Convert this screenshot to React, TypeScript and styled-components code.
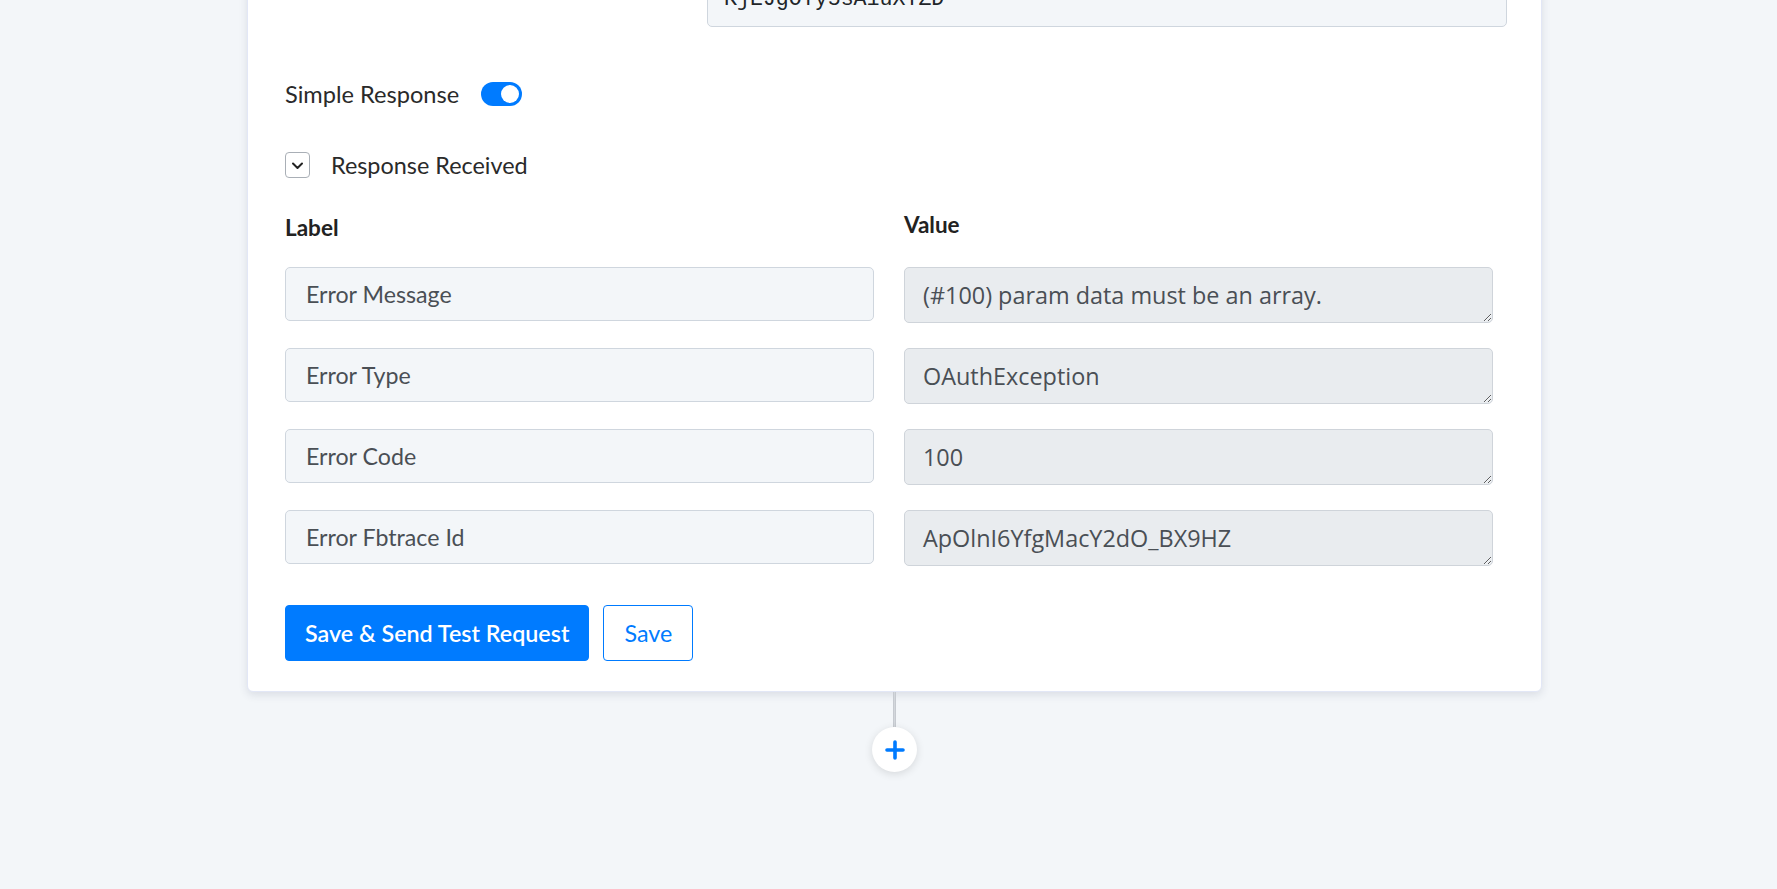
import styled, { createGlobalStyle } from "styled-components";

const GlobalStyle = createGlobalStyle`
  html, body {
    margin: 0;
    padding: 0;
    background: #f3f6f9;
    overflow: hidden;
  }
  body {
    font-family: Lato, "Open Sans", sans-serif;
    color: #212529;
  }
`;

const Page = styled.div`
  display: flex;
  flex-direction: column;
  align-items: center;
  padding-left: 12px;
  height: 889px;
`;

const Card = styled.div`
  width: 1295px;
  box-sizing: border-box;
  margin-top: -80px;
  padding: 50px 36px 30px 37px;
  background: #fff;
  border: 1px solid #e2e7f6;
  border-radius: 6px;
  box-shadow: 0 3px 8px rgba(40, 50, 80, 0.12);
`;

const FieldRow = styled.div`
  display: grid;
  grid-template-columns: 422px 800px;
`;

const TokenInput = styled.input`
  grid-column: 2;
  height: 56px;
  box-sizing: border-box;
  padding: 0 16px;
  background: #f3f6f9;
  border: 1px solid #cfd6de;
  border-radius: 5px;
  font-family: "Liberation Mono", monospace;
  font-size: 21.6px;
  color: #212529;
  outline: none;
`;

const ToggleRow = styled.label`
  display: flex;
  align-items: center;
  gap: 22px;
  height: 28px;
  margin-top: 53px;
  font-size: 23.6px;
  color: #2a2a2a;
`;

const Switch = styled.span<{ $on: boolean }>`
  position: relative;
  width: 41px;
  height: 24px;
  border-radius: 12px;
  background: ${(p) => (p.$on ? "#007bff" : "#ced4da")};
  &::after {
    content: "";
    position: absolute;
    top: 3px;
    left: ${(p) => (p.$on ? "20px" : "3px")};
    width: 18px;
    height: 18px;
    border-radius: 50%;
    background: #fff;
  }
`;

const CollapseRow = styled.div`
  display: flex;
  align-items: center;
  gap: 21px;
  height: 28px;
  margin-top: 43px;
  font-size: 23.4px;
  color: #2a2a2a;
`;

const ChevronBox = styled.button`
  display: flex;
  align-items: center;
  justify-content: center;
  width: 25px;
  height: 26px;
  padding: 0;
  background: #fff;
  border: 1px solid #a9afb6;
  border-radius: 4px;
  color: #222;
`;

const Grid = styled.div`
  display: grid;
  grid-template-columns: 589px 589px;
  column-gap: 30px;
  row-gap: 25px;
  margin-top: 32px;
`;

const HeadCell = styled.div<{ $shift?: number }>`
  height: 28px;
  line-height: 28px;
  margin-top: ${(p) => p.$shift ?? 0}px;
  margin-bottom: ${(p) => 3 - (p.$shift ?? 0)}px;
  font-size: 22.5px;
  font-weight: 700;
  color: #222;
`;

const LabelInput = styled.input`
  height: 54px;
  box-sizing: border-box;
  padding: 0 20px;
  background: #f3f6f9;
  border: 1px solid #cfd6de;
  border-radius: 5px;
  font-family: Lato, sans-serif;
  font-size: 23.2px;
  color: #4a4f55;
  outline: none;
`;

const ValueArea = styled.textarea`
  height: 56px;
  box-sizing: border-box;
  padding: 11px 18px 0;
  background: #e9ecef;
  border: 1px solid #cfd4da;
  border-radius: 5px;
  font-family: "Open Sans", sans-serif;
  font-size: 23.4px;
  line-height: 32px;
  color: #4a4f55;
  resize: vertical;
  overflow: hidden;
  outline: none;
`;

const Actions = styled.div`
  display: flex;
  gap: 14px;
  margin-top: 39px;
`;

const Button = styled.button<{ $primary?: boolean }>`
  height: 56px;
  padding: 0 ${(p) => (p.$primary ? "19px" : "20px")};
  border-radius: 4px;
  border: 1px solid #007bff;
  background: ${(p) => (p.$primary ? "#007bff" : "#fff")};
  color: ${(p) => (p.$primary ? "#fff" : "#007bff")};
  font-family: Lato, sans-serif;
  font-size: 23.3px;
  font-weight: ${(p) => (p.$primary ? 600 : 400)};
  cursor: pointer;
`;

const Connector = styled.div`
  width: 3px;
  height: 35px;
  background: #d3d7dc;
  border-left: 1px solid #c6cad0;
  border-right: 1px solid #c6cad0;
  box-sizing: border-box;
`;

const AddButton = styled.button`
  display: flex;
  align-items: center;
  justify-content: center;
  width: 45px;
  height: 45px;
  padding: 0;
  border: none;
  border-radius: 50%;
  background: #fff;
  box-shadow: 0 2px 8px rgba(0, 0, 0, 0.12);
  cursor: pointer;
`;

const rows = [
  { label: "Error Message", value: "(#100) param data must be an array." },
  { label: "Error Type", value: "OAuthException" },
  { label: "Error Code", value: "100" },
  { label: "Error Fbtrace Id", value: "ApOlnI6YfgMacY2dO_BX9HZ" },
];

export default function App() {
  return (
    <>
      <GlobalStyle />
      <Page>
        <Card>
          <FieldRow>
            <TokenInput readOnly value="KjEJgOYy5sA1uXYZD" />
          </FieldRow>

          <ToggleRow>
            Simple Response
            <Switch $on />
          </ToggleRow>

          <CollapseRow>
            <ChevronBox aria-label="collapse">
              <svg width="15" height="15" viewBox="0 0 15 15" fill="none">
                <path d="M3 5.5 7.5 10 12 5.5" stroke="currentColor" strokeWidth="2" strokeLinecap="round" strokeLinejoin="round" />
              </svg>
            </ChevronBox>
            Response Received
          </CollapseRow>

          <Grid>
            <HeadCell $shift={3}>Label</HeadCell>
            <HeadCell>Value</HeadCell>
            {rows.map((r) => (
              <>
                <LabelInput key={r.label} readOnly value={r.label} />
                <ValueArea key={r.label + "-v"} readOnly value={r.value} />
              </>
            ))}
          </Grid>

          <Actions>
            <Button $primary>Save &amp; Send Test Request</Button>
            <Button>Save</Button>
          </Actions>
        </Card>

        <Connector />
        <AddButton aria-label="add step">
          <svg width="22" height="22" viewBox="0 0 22 22">
            <path d="M11 3v16M3 11h16" stroke="#007bff" strokeWidth="3.6" strokeLinecap="round" />
          </svg>
        </AddButton>
      </Page>
    </>
  );
}
